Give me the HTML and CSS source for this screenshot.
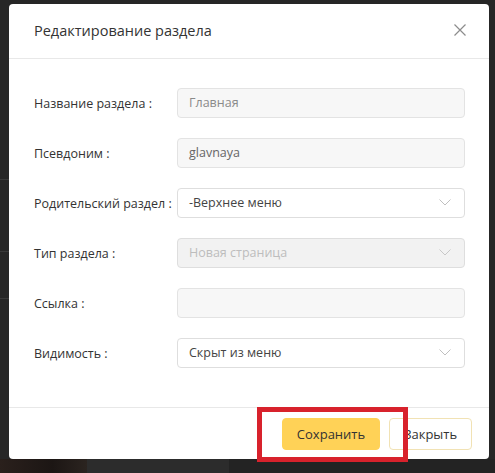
FILE: index.html
```html
<!DOCTYPE html>
<html lang="ru">
<head>
<meta charset="utf-8">
<link rel="stylesheet" href="styles.css">
</head>
<body>
<div class="backdrop">
  <div class="bg-left">
    <div class="bg-line l1"></div>
    <div class="bg-line l2"></div>
    <div class="bg-line l3"></div>
  </div>
  <div class="modal">
    <div class="modal-header">
      <span class="modal-title">Редактирование раздела</span>
      <svg class="close-icon" width="12" height="12" viewBox="0 0 12 12"><path d="M0.5 0.5 L11.5 11.5 M11.5 0.5 L0.5 11.5" stroke="#8c8c8c" stroke-width="1.2" fill="none"/></svg>
    </div>
    <div class="modal-body">
      <div class="row">
        <label class="label">Название раздела :</label>
        <div class="field input">Главная</div>
      </div>
      <div class="row">
        <label class="label">Псевдоним :</label>
        <div class="field input dark">glavnaya</div>
      </div>
      <div class="row">
        <label class="label">Родительский раздел :</label>
        <div class="field select">-Верхнее меню<svg class="chev" width="12" height="7" viewBox="0 0 12 7"><path d="M0.5 0.5 L6 6 L11.5 0.5" stroke="#c0c0c0" stroke-width="1" fill="none"/></svg></div>
      </div>
      <div class="row">
        <label class="label">Тип раздела :</label>
        <div class="field select disabled">Новая страница<svg class="chev" width="12" height="7" viewBox="0 0 12 7"><path d="M0.5 0.5 L6 6 L11.5 0.5" stroke="#c8c8c8" stroke-width="1" fill="none"/></svg></div>
      </div>
      <div class="row">
        <label class="label">Ссылка :</label>
        <div class="field input"></div>
      </div>
      <div class="row">
        <label class="label">Видимость :</label>
        <div class="field select">Скрыт из меню<svg class="chev" width="12" height="7" viewBox="0 0 12 7"><path d="M0.5 0.5 L6 6 L11.5 0.5" stroke="#c0c0c0" stroke-width="1" fill="none"/></svg></div>
      </div>
    </div>
    <div class="modal-footer">
      <button class="btn btn-save">Сохранить</button>
      <button class="btn btn-close">Закрыть</button>
      <div class="highlight"></div>
    </div>
  </div>
  <div class="bottom-strip">
    <div class="bs-photo"></div>
    <div class="bs-gray"></div>
  </div>
</div>
</body>
</html>
```
FILE: styles.css
```css
* { box-sizing: border-box; }
html, body { margin: 0; padding: 0; }
body {
  background: #262626;
  font-family: "Open Sans", "Noto Sans", sans-serif;
  width: 495px;
  height: 473px;
  overflow: hidden;
}
.backdrop {
  position: relative;
  width: 495px;
  height: 473px;
  padding: 4px 6px 0 9px;
}
.bg-left {
  position: absolute;
  left: 0;
  top: 0;
  width: 9px;
  height: 460px;
  background: #272727;
}
.bg-line {
  position: absolute;
  left: 0;
  width: 9px;
  height: 1px;
  background: #3a3a3a;
}
.l1 { top: 179px; }
.l2 { top: 251px; }
.l3 { top: 298px; }
.modal {
  position: relative;
  width: 480px;
  height: 455px;
  background: #fff;
  border-radius: 4px;
  display: flex;
  flex-direction: column;
  z-index: 1;
}
.modal-header {
  height: 55px;
  border-bottom: 1px solid #e8e8e8;
  display: flex;
  align-items: center;
  justify-content: space-between;
  padding: 0 23px 2px 25px;
}
.modal-title {
  font-size: 14.5px;
  color: #333;
}
.close-icon { display: block; }
.modal-body {
  flex: 1;
  padding: 29px 24px 0 25px;
  display: flex;
  flex-direction: column;
  gap: 20px;
  border-bottom: 1px solid #e8e8e8;
}
.row {
  display: flex;
  align-items: center;
  height: 30px;
}
.label {
  width: 143px;
  flex: none;
  font-size: 12.5px;
  color: #333;
}
.field {
  flex: 1;
  height: 30px;
  border-radius: 4px;
  border: 1px solid #e3e3e3;
  font-size: 12.5px;
  display: flex;
  align-items: center;
  padding: 0 12px 1px 11px;
  position: relative;
}
.input {
  background: #f7f7f7;
  color: #8a8a8a;
}
.input.dark { color: #666; }
.select {
  background: #fff;
  border-color: #dedede;
  color: #444;
  justify-content: space-between;
}
.select.disabled {
  background: #f2f2f2;
  color: #bdbdbd;
}
.chev { display: block; margin-right: 1px; }
.modal-footer {
  position: relative;
  height: 51px;
  display: flex;
  justify-content: flex-end;
  align-items: flex-start;
  padding: 10px 17px 0 0;
  gap: 9px;
}
.btn {
  font-family: inherit;
  font-size: 13px;
  height: 32px;
  border-radius: 4px;
  color: #333;
  padding: 0;
  cursor: pointer;
}
.btn-save {
  width: 98px;
  background: #ffd257;
  border: 1px solid #ffd257;
}
.btn-close {
  width: 83px;
  background: #fff;
  border: 1px solid #f1e2b4;
}
.highlight {
  position: absolute;
  left: 248px;
  top: -1px;
  width: 151px;
  height: 55px;
  border: 5px solid #d8222c;
  z-index: 2;
}
.bottom-strip {
  position: absolute;
  left: 0;
  top: 459px;
  width: 495px;
  height: 14px;
  background: #232323;
  display: flex;
}
.bs-photo {
  width: 87px;
  background: linear-gradient(90deg, #2a201c, #1c1614 60%, #2b2420);
}
.bs-gray {
  width: 142px;
  background: #2c2c2c;
}
```
